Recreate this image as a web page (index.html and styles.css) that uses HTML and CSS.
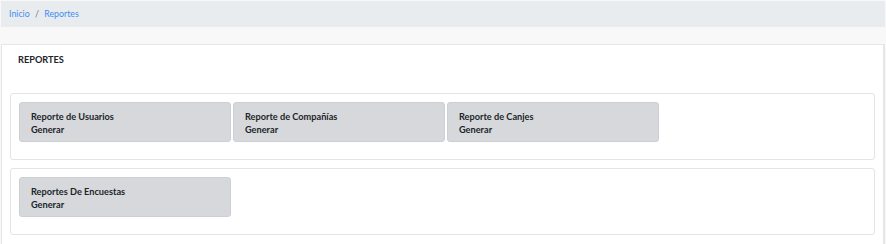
FILE: index.html
```html
<!DOCTYPE html>
<html lang="es">
<head>
    <meta charset="UTF-8">
    <meta name="viewport" content="width=device-width, initial-scale=1.0">
    <title>Reportes</title>
    <link rel="stylesheet" href="styles.css">
</head>
<body>

<div class="page">
    <nav class="breadcrumb">
        <a href="#">Inicio</a>
        <span class="sep">/</span>
        <a href="#">Reportes</a>
    </nav>

    <div class="card">
        <h5 class="card-title">REPORTES</h5>

        <div class="report-group">
            <div class="report-tile">
                <span class="tile-title">Reporte de Usuarios</span>
                <span class="tile-action">Generar</span>
            </div>
            <div class="report-tile">
                <span class="tile-title">Reporte de Compañías</span>
                <span class="tile-action">Generar</span>
            </div>
            <div class="report-tile">
                <span class="tile-title">Reporte de Canjes</span>
                <span class="tile-action">Generar</span>
            </div>
        </div>

        <div class="report-group">
            <div class="report-tile">
                <span class="tile-title">Reportes De Encuestas</span>
                <span class="tile-action">Generar</span>
            </div>
        </div>
    </div>
</div>

</body>
</html>
```

FILE: styles.css
```css
body {
    font-family: Lato, "Open Sans", sans-serif;
    margin: 0;
    background-color: #f8f8f8;
    color: #212529;
}
.page {
    padding: 1px;
}
.breadcrumb {
    background-color: #e9ecef;
    height: 26px;
    line-height: 26px;
    padding: 0 8px;
    font-size: 8.8px;
    margin-bottom: 17px;
}
.breadcrumb a {
    color: #3d8ef0;
    text-decoration: none;
}
.breadcrumb .sep {
    color: #6c757d;
    padding: 0 3px;
}
.card {
    background-color: white;
    border: 1px solid #e6e6e6;
    border-right-width: 2px;
    padding: 0 8px 8px 8px;
}
.card-title {
    margin: 0;
    padding: 8px 8px 0 8px;
    font-size: 9.2px;
    font-weight: 700;
    line-height: 13px;
    height: 40px;
}
.report-group {
    display: flex;
    gap: 2px;
    border: 1px solid #e4e4e4;
    border-radius: 3px;
    padding: 8px 8px 17px 8px;
    margin-bottom: 8px;
}
.report-tile {
    width: 212px;
    height: 40px;
    box-sizing: border-box;
    padding: 7px 11px;
    background-color: #d6d8db;
    border: 1px solid #cdd0d3;
    border-radius: 3px;
    display: flex;
    flex-direction: column;
    font-size: 9.2px;
    line-height: 13px;
}
.tile-title {
    font-weight: 700;
}
.tile-action {
    font-weight: 700;
}
```
